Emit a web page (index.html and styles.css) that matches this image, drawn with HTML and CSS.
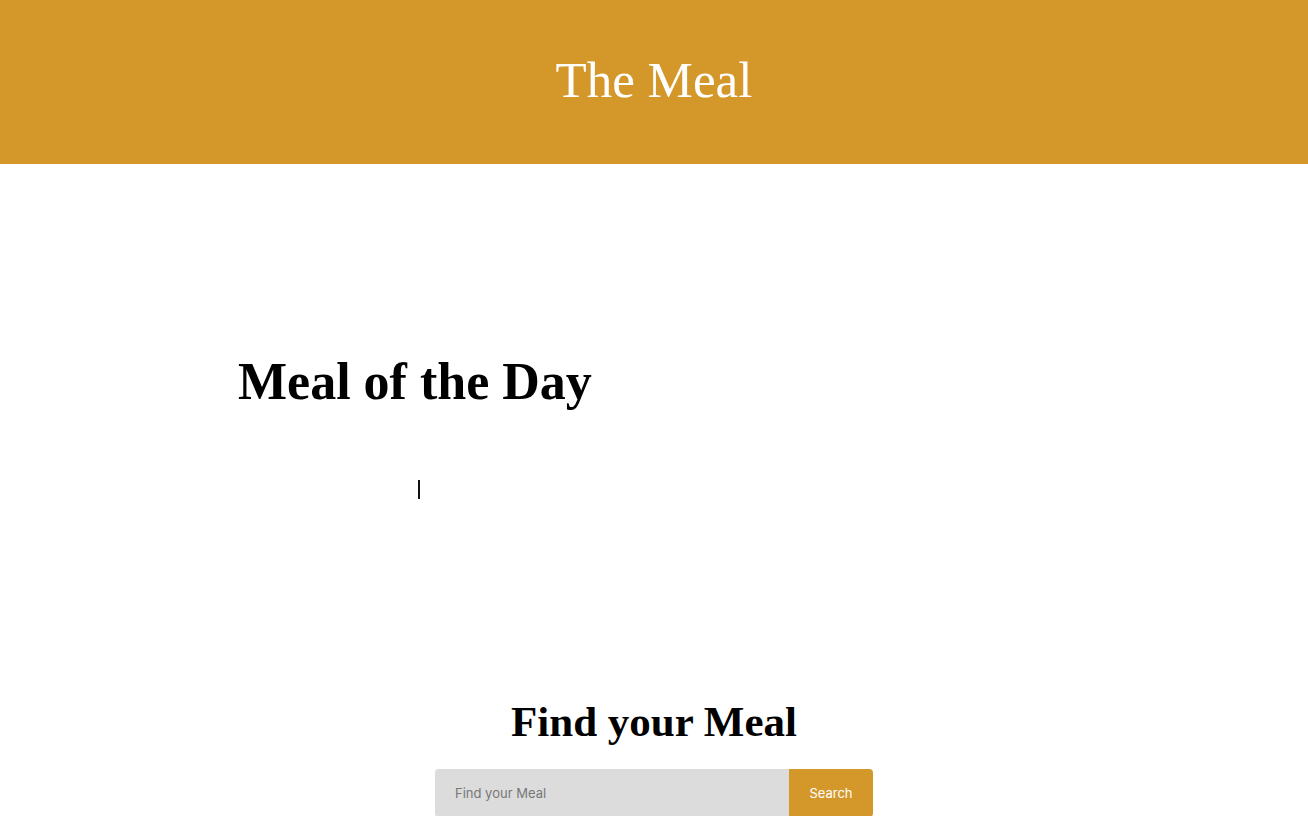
FILE: index.html
```html
<!DOCTYPE html>
<html lang="en">
<head>
<meta charset="utf-8">
<title>The Meal</title>
<link rel="stylesheet" href="styles.css">
</head>
<body>
<header class="site-header">
  <h1 class="site-title">The Meal</h1>
</header>
<main class="content">
  <section class="daily">
    <h2 class="daily-title">Meal of the Day</h2>
    <div class="daily-body"><span class="caret"></span></div>
  </section>
  <section class="finder">
    <h2 class="finder-title">Find your Meal</h2>
    <form class="search">
      <input class="search-input" type="text" placeholder="Find your Meal">
      <button class="search-btn" type="button">Search</button>
    </form>
  </section>
</main>
</body>
</html>
```

FILE: styles.css
```css
* { box-sizing: border-box; }
html, body { margin: 0; padding: 0; background: #fff; }
body { font-family: "Liberation Serif", "DejaVu Serif", serif; color: #000; overflow: hidden; }

.site-header {
  height: 164px;
  background: #d4982a;
  display: flex;
  align-items: center;
  justify-content: center;
}
.site-title {
  margin: 0;
  font-weight: 400;
  font-size: 51px;
  color: #fff;
  line-height: 1;
  padding-bottom: 4px;
}

.daily { padding: 188px 0 0 238px; }
.daily-title {
  margin: 0;
  font-size: 52px;
  font-weight: 700;
  line-height: 60px;
}
.daily-body { padding: 68px 0 0 180px; height: 285px; }
.caret {
  display: block;
  width: 2px;
  height: 19px;
  background: #111;
}

.finder { display: flex; flex-direction: column; align-items: center; }
.finder-title {
  margin: 0;
  font-size: 43px;
  font-weight: 700;
  line-height: 50px;
}
.search {
  display: flex;
  width: 438px;
  height: 48px;
  margin-top: 22px;
  border-radius: 4px;
  overflow: hidden;
}
.search-input {
  flex: 1;
  border: 0;
  background: #dcdcdc;
  padding: 0 20px;
  font-family: "Inter", "Liberation Sans", sans-serif;
  font-size: 13px;
  color: #333;
  outline: none;
}
.search-input::placeholder { color: #777; }
.search-btn {
  width: 84px;
  border: 0;
  background: #d4982a;
  color: #fff;
  font-family: "Inter", "Liberation Sans", sans-serif;
  font-size: 13px;
}
```
